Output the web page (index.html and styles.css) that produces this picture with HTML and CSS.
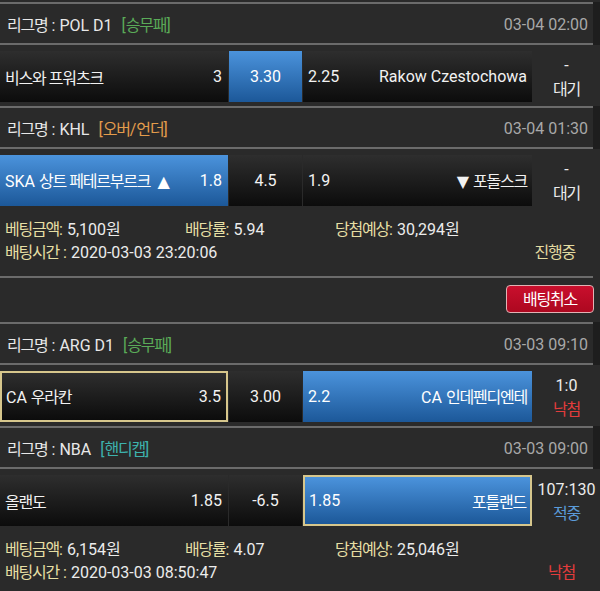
FILE: index.html
```html
<!DOCTYPE html>
<html lang="ko">
<head>
<meta charset="utf-8">
<link rel="stylesheet" href="styles.css">
</head>
<body>
<div class="list">
  <div class="hdr">
    <div class="league"><span class="k">리그명</span> : POL D1<span class="tag tag-g">[<span class="k">승무패</span>]</span></div>
    <div class="date">03-04 02:00</div>
  </div>
  <div class="row">
    <div class="cell home"><span class="k">비스와 프워츠크</span><span>3</span></div>
    <div class="cell draw blue">3.30</div>
    <div class="cell away"><span>2.25</span><span>Rakow Czestochowa</span></div>
    <div class="status"><span>-</span><span class="k">대기</span></div>
  </div>

  <div class="hdr">
    <div class="league"><span class="k">리그명</span> : KHL<span class="tag tag-o">[<span class="k">오버</span>/<span class="k">언더</span>]</span></div>
    <div class="date">03-04 01:30</div>
  </div>
  <div class="row">
    <div class="cell home blue"><span>SKA <span class="k">상트 페테르부르크</span> <span class="tri">▲</span></span><span>1.8</span></div>
    <div class="cell draw">4.5</div>
    <div class="cell away"><span>1.9</span><span><span class="tri">▼</span> <span class="k">포돌스크</span></span></div>
    <div class="status"><span>-</span><span class="k">대기</span></div>
  </div>
  <div class="info">
    <div class="iline">
      <span class="c1"><span class="lb"><span class="k">베팅금액</span>:</span> 5,100<span class="k">원</span></span>
      <span class="c2"><span class="lb"><span class="k">배당률</span>:</span> 5.94</span>
      <span class="c3"><span class="lb"><span class="k">당첨예상</span>:</span> 30,294<span class="k">원</span></span>
    </div>
    <div class="iline">
      <span class="c1 wide"><span class="lb"><span class="k">배팅시간</span> :</span> 2020-03-03 23:20:06</span>
      <span class="st st-run"><span class="k">진행중</span></span>
    </div>
  </div>
  <div class="sep"></div>
  <div class="actions">
    <button class="btn" type="button"><span class="k">배팅취소</span></button>
  </div>

  <div class="hdr">
    <div class="league"><span class="k">리그명</span> : ARG D1<span class="tag tag-g">[<span class="k">승무패</span>]</span></div>
    <div class="date">03-03 09:10</div>
  </div>
  <div class="row">
    <div class="cell home pick"><span>CA <span class="k">우라칸</span></span><span>3.5</span></div>
    <div class="cell draw">3.00</div>
    <div class="cell away blue"><span>2.2</span><span>CA <span class="k">인데펜디엔테</span></span></div>
    <div class="status"><span>1:0</span><span class="k lose">낙첨</span></div>
  </div>

  <div class="hdr">
    <div class="league"><span class="k">리그명</span> : NBA<span class="tag tag-t">[<span class="k">핸디캡</span>]</span></div>
    <div class="date">03-03 09:00</div>
  </div>
  <div class="row">
    <div class="cell home"><span class="k">올랜도</span><span>1.85</span></div>
    <div class="cell draw">-6.5</div>
    <div class="cell away blue pick"><span>1.85</span><span class="k">포틀랜드</span></div>
    <div class="status"><span>107:130</span><span class="k win">적중</span></div>
  </div>
  <div class="info">
    <div class="iline">
      <span class="c1"><span class="lb"><span class="k">베팅금액</span>:</span> 6,154<span class="k">원</span></span>
      <span class="c2"><span class="lb"><span class="k">배당률</span>:</span> 4.07</span>
      <span class="c3"><span class="lb"><span class="k">당첨예상</span>:</span> 25,046<span class="k">원</span></span>
    </div>
    <div class="iline">
      <span class="c1 wide"><span class="lb"><span class="k">배팅시간</span> :</span> 2020-03-03 08:50:47</span>
      <span class="st lose"><span class="k">낙첨</span></span>
    </div>
  </div>
</div>
</body>
</html>
```

FILE: styles.css
```css
* {
  box-sizing: border-box;
  margin: 0;
  padding: 0;
}

html,
body {
  background: #2a2a2a;
}

body {
  width: 600px;
  height: 591px;
  overflow: hidden;
  padding-top: 2px;
  font-family: Roboto, "Noto Sans CJK KR", sans-serif;
  font-size: 16px;
  line-height: 20px;
  color: #ececec;
}

.k {
  font-family: "Noto Sans CJK KR", sans-serif;
  font-size: 16px;
  letter-spacing: -1.2px;
}

.tri {
  font-family: "DejaVu Sans", sans-serif;
  font-size: 16px;
  margin-left: 3px;
}

/* league header */
.hdr {
  display: flex;
  justify-content: space-between;
  align-items: center;
  height: 43px;
  margin-right: 7px;
  padding: 2px 5px 0 7px;
  border-top: 2px solid #6b6b6b;
  border-bottom: 2px solid #6b6b6b;
  background: #2a2a2a;
  box-shadow: 7px 0 0 #1e1e1e;
}

.league {
  color: #e8e8e8;
}

.tag {
  margin-left: 9px;
}

.tag-g {
  color: #5aab58;
}

.tag-o {
  color: #e39c4c;
}

.tag-t {
  color: #3db2ad;
}

.date {
  color: #a8a8a8;
}

/* match row */
.row {
  display: flex;
  gap: 1px;
  height: 61px;
  padding: 6px 0 4px;
}

.cell {
  display: flex;
  align-items: center;
  height: 51px;
  background: linear-gradient(#2e2e2e, #0c0c0c);
  color: #f2f2f2;
  white-space: nowrap;
}

.home {
  width: 228px;
  justify-content: space-between;
  padding: 0 6px 0 5px;
}

.draw {
  width: 73px;
  justify-content: center;
}

.away {
  width: 229px;
  justify-content: space-between;
  padding: 0 5px 0 5px;
}

.blue {
  background: linear-gradient(#4b93dc, #1c5899);
  color: #fff;
}

.pick {
  border: 2px solid #d6c68c;
}

.home.pick {
  padding-left: 4px;
  padding-right: 5px;
}

.away.pick {
  padding-left: 4px;
  padding-right: 4px;
}

.status {
  flex: 1;
  display: flex;
  flex-direction: column;
  align-items: center;
  justify-content: center;
  line-height: 23px;
  color: #ececec;
}

.lose {
  color: #e23c3c;
}

.win {
  color: #5b9bd9;
}

/* bet info */
.info {
  margin-right: 7px;
  padding: 7px 18px 13px 5px;
}

.iline {
  display: grid;
  grid-template-columns: 180px 150px 1fr;
  align-items: center;
  height: 23px;
  line-height: 23px;
  white-space: nowrap;
}

.wide {
  grid-column: 1 / 3;
}

.lb {
  color: #e6dfa4;
}

.st {
  justify-self: end;
}

.st-run {
  color: #e2daa0;
}

.sep {
  height: 2px;
  margin-right: 7px;
  background: #6b6b6b;
}

.actions {
  display: flex;
  justify-content: flex-end;
  height: 44px;
  padding: 7px 6px 9px 0;
}

.btn {
  width: 88px;
  height: 28px;
  border: 1px solid #e2b2b4;
  border-radius: 4px;
  background: linear-gradient(#c90f2d, #ad0820);
  color: #fff;
  font-family: inherit;
  line-height: 20px;
}
```
